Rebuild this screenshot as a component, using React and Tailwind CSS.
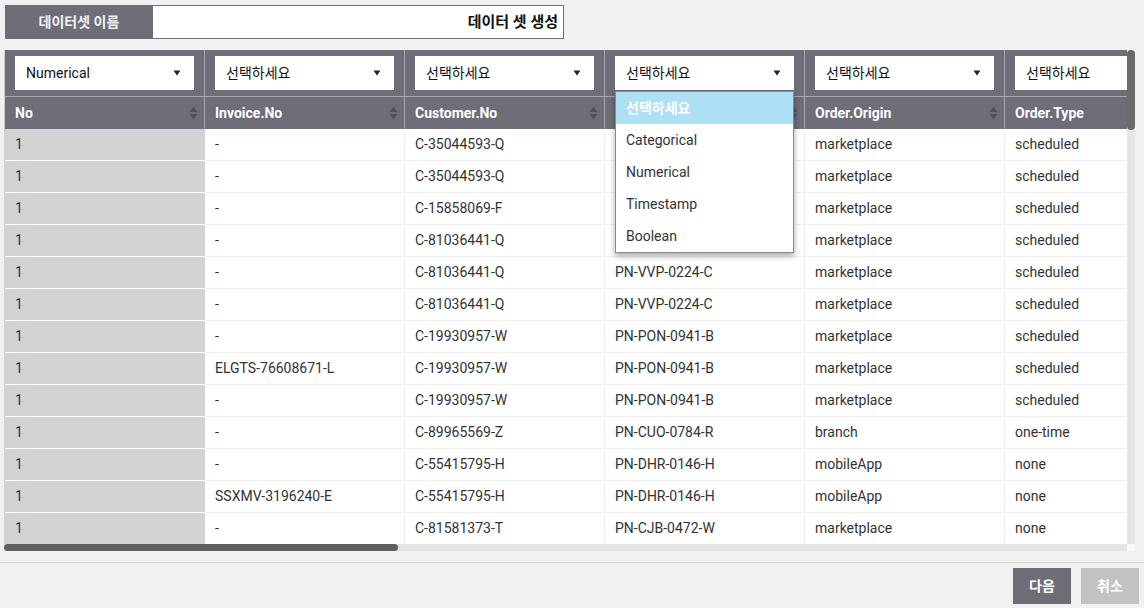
import React, { useState } from 'react'

const font = { fontFamily: 'Roboto, "Noto Sans CJK KR", sans-serif' }

const columns = [
    { name: 'No', type: 'Numerical' },
    { name: 'Invoice.No', type: '선택하세요' },
    { name: 'Customer.No', type: '선택하세요' },
    { name: 'Product.No', type: '선택하세요', open: true },
    { name: 'Order.Origin', type: '선택하세요' },
    { name: 'Order.Type', type: '선택하세요' },
]

// 드롭다운에 가려진 칸은 비워둠
const rows = [
    ['1', '-', 'C-35044593-Q', '', 'marketplace', 'scheduled'],
    ['1', '-', 'C-35044593-Q', '', 'marketplace', 'scheduled'],
    ['1', '-', 'C-15858069-F', '', 'marketplace', 'scheduled'],
    ['1', '-', 'C-81036441-Q', '', 'marketplace', 'scheduled'],
    ['1', '-', 'C-81036441-Q', 'PN-VVP-0224-C', 'marketplace', 'scheduled'],
    ['1', '-', 'C-81036441-Q', 'PN-VVP-0224-C', 'marketplace', 'scheduled'],
    ['1', '-', 'C-19930957-W', 'PN-PON-0941-B', 'marketplace', 'scheduled'],
    ['1', 'ELGTS-76608671-L', 'C-19930957-W', 'PN-PON-0941-B', 'marketplace', 'scheduled'],
    ['1', '-', 'C-19930957-W', 'PN-PON-0941-B', 'marketplace', 'scheduled'],
    ['1', '-', 'C-89965569-Z', 'PN-CUO-0784-R', 'branch', 'one-time'],
    ['1', '-', 'C-55415795-H', 'PN-DHR-0146-H', 'mobileApp', 'none'],
    ['1', 'SSXMV-3196240-E', 'C-55415795-H', 'PN-DHR-0146-H', 'mobileApp', 'none'],
    ['1', '-', 'C-81581373-T', 'PN-CJB-0472-W', 'marketplace', 'none'],
]

const options = ['선택하세요', 'Categorical', 'Numerical', 'Timestamp', 'Boolean']

const Caret = () => (
    <svg width="8" height="6" viewBox="0 0 8 6" className="shrink-0">
        <path d="M0.5 0.5 L7.5 0.5 L4 5.5 Z" fill="#222" />
    </svg>
)

const SortIcon = () => (
    <svg width="9" height="14" viewBox="0 0 9 14" className="shrink-0">
        <path d="M4.5 0.5 L8.5 6 L0.5 6 Z" fill="#54535d" />
        <path d="M0.5 8 L8.5 8 L4.5 13.5 Z" fill="#54535d" />
    </svg>
)

export default function App() {
    const [selected] = useState(0)

    return (
        <div className="w-[1144px] h-[608px] bg-[#f1f1f1] overflow-hidden text-[14px] text-[#333]" style={font}>
            {/* 상단 이름 입력 */}
            <div className="flex pt-[5px] pl-[5px]">
                <div className="w-[148px] h-[34px] bg-[#6e6d78] text-[#f2f2f2] font-bold flex items-center justify-center text-[14px]">
                    데이터셋 이름
                </div>
                <div className="w-[411px] h-[34px] bg-white border border-[#6e6d78] border-l-0 flex items-center justify-end pr-[5px] text-[15px] font-bold text-[#111]">
                    데이터 셋 생성
                </div>
            </div>

            {/* 테이블 */}
            <div className="mt-[11px] ml-[4px] flex w-[1131px] h-[501px]">
                <div className="flex flex-col w-[1123px]">
                    <div className="h-[494px] overflow-hidden bg-white border-l border-[#d0d0d0]">
                        <div className="flex w-max">
                            {columns.map((col, ci) => (
                                <div key={col.name} className="w-[200px] shrink-0">
                                    <div className="relative h-[47px] bg-[#6e6d78] border-r border-b border-[#a9a8b1] pl-[10px] pr-[10px] pt-[6px]">
                                        <div className="h-[34px] bg-white flex items-center justify-between pl-[11px] pr-[13px]">
                                            <span className="text-[#111]">{col.type}</span>
                                            <Caret />
                                        </div>
                                        {col.open && (
                                            <div className="absolute left-[10px] top-[41px] w-[179px] bg-white border border-[#8a8a8a] shadow-[0_3px_6px_rgba(0,0,0,0.35)] z-10">
                                                {options.map((o, oi) => (
                                                    <div
                                                        key={o}
                                                        className={`h-[32px] flex items-center pl-[10px] ${oi === selected ? 'bg-[#ade0f5] text-white font-bold' : 'text-[#333]'}`}
                                                    >
                                                        {o}
                                                    </div>
                                                ))}
                                            </div>
                                        )}
                                    </div>
                                    <div className="h-[32px] bg-[#6e6d78] border-r border-[#a9a8b1] flex items-center justify-between pl-[10px] pr-[6px] text-white font-bold">
                                        <span>{col.name}</span>
                                        <SortIcon />
                                    </div>
                                    {rows.map((r, ri) => (
                                        <div
                                            key={ri}
                                            className={
                                                ci === 0
                                                    ? 'h-[32px] bg-[#d2d2d2] border-b border-white flex items-center pl-[10px] text-[#333]'
                                                    : 'h-[32px] bg-white border-b border-r border-[#eeeeee] flex items-center pl-[10px] text-[#333]'
                                            }
                                        >
                                            {r[ci]}
                                        </div>
                                    ))}
                                </div>
                            ))}
                        </div>
                    </div>
                    {/* 가로 스크롤 */}
                    <div className="h-[7px] bg-[#e3e3e3] relative">
                        <div className="absolute left-[0px] top-0 w-[394px] h-[7px] bg-[#5f5f5f] rounded-full" />
                    </div>
                </div>
                {/* 세로 스크롤 */}
                <div className="w-[8px] flex flex-col">
                    <div className="flex-1 bg-[#e6e6e6] relative">
                        <div className="absolute top-0 left-0 w-[8px] h-[80px] bg-[#6a6a6a] rounded-[4px]" />
                    </div>
                    <div className="h-[7px] bg-[#f8f8f8]" />
                </div>
            </div>

            {/* 하단 버튼 */}
            <div className="mt-[11px] border-t border-[#d6d6d6] flex justify-end gap-[10px] pt-[5px] pr-[5px]">
                <button className="w-[58px] h-[36px] bg-[#6e6d78] text-white font-bold text-[14px]">다음</button>
                <button className="w-[58px] h-[36px] bg-[#c2c2c2] text-white font-bold text-[14px]">취소</button>
            </div>
        </div>
    )
}
